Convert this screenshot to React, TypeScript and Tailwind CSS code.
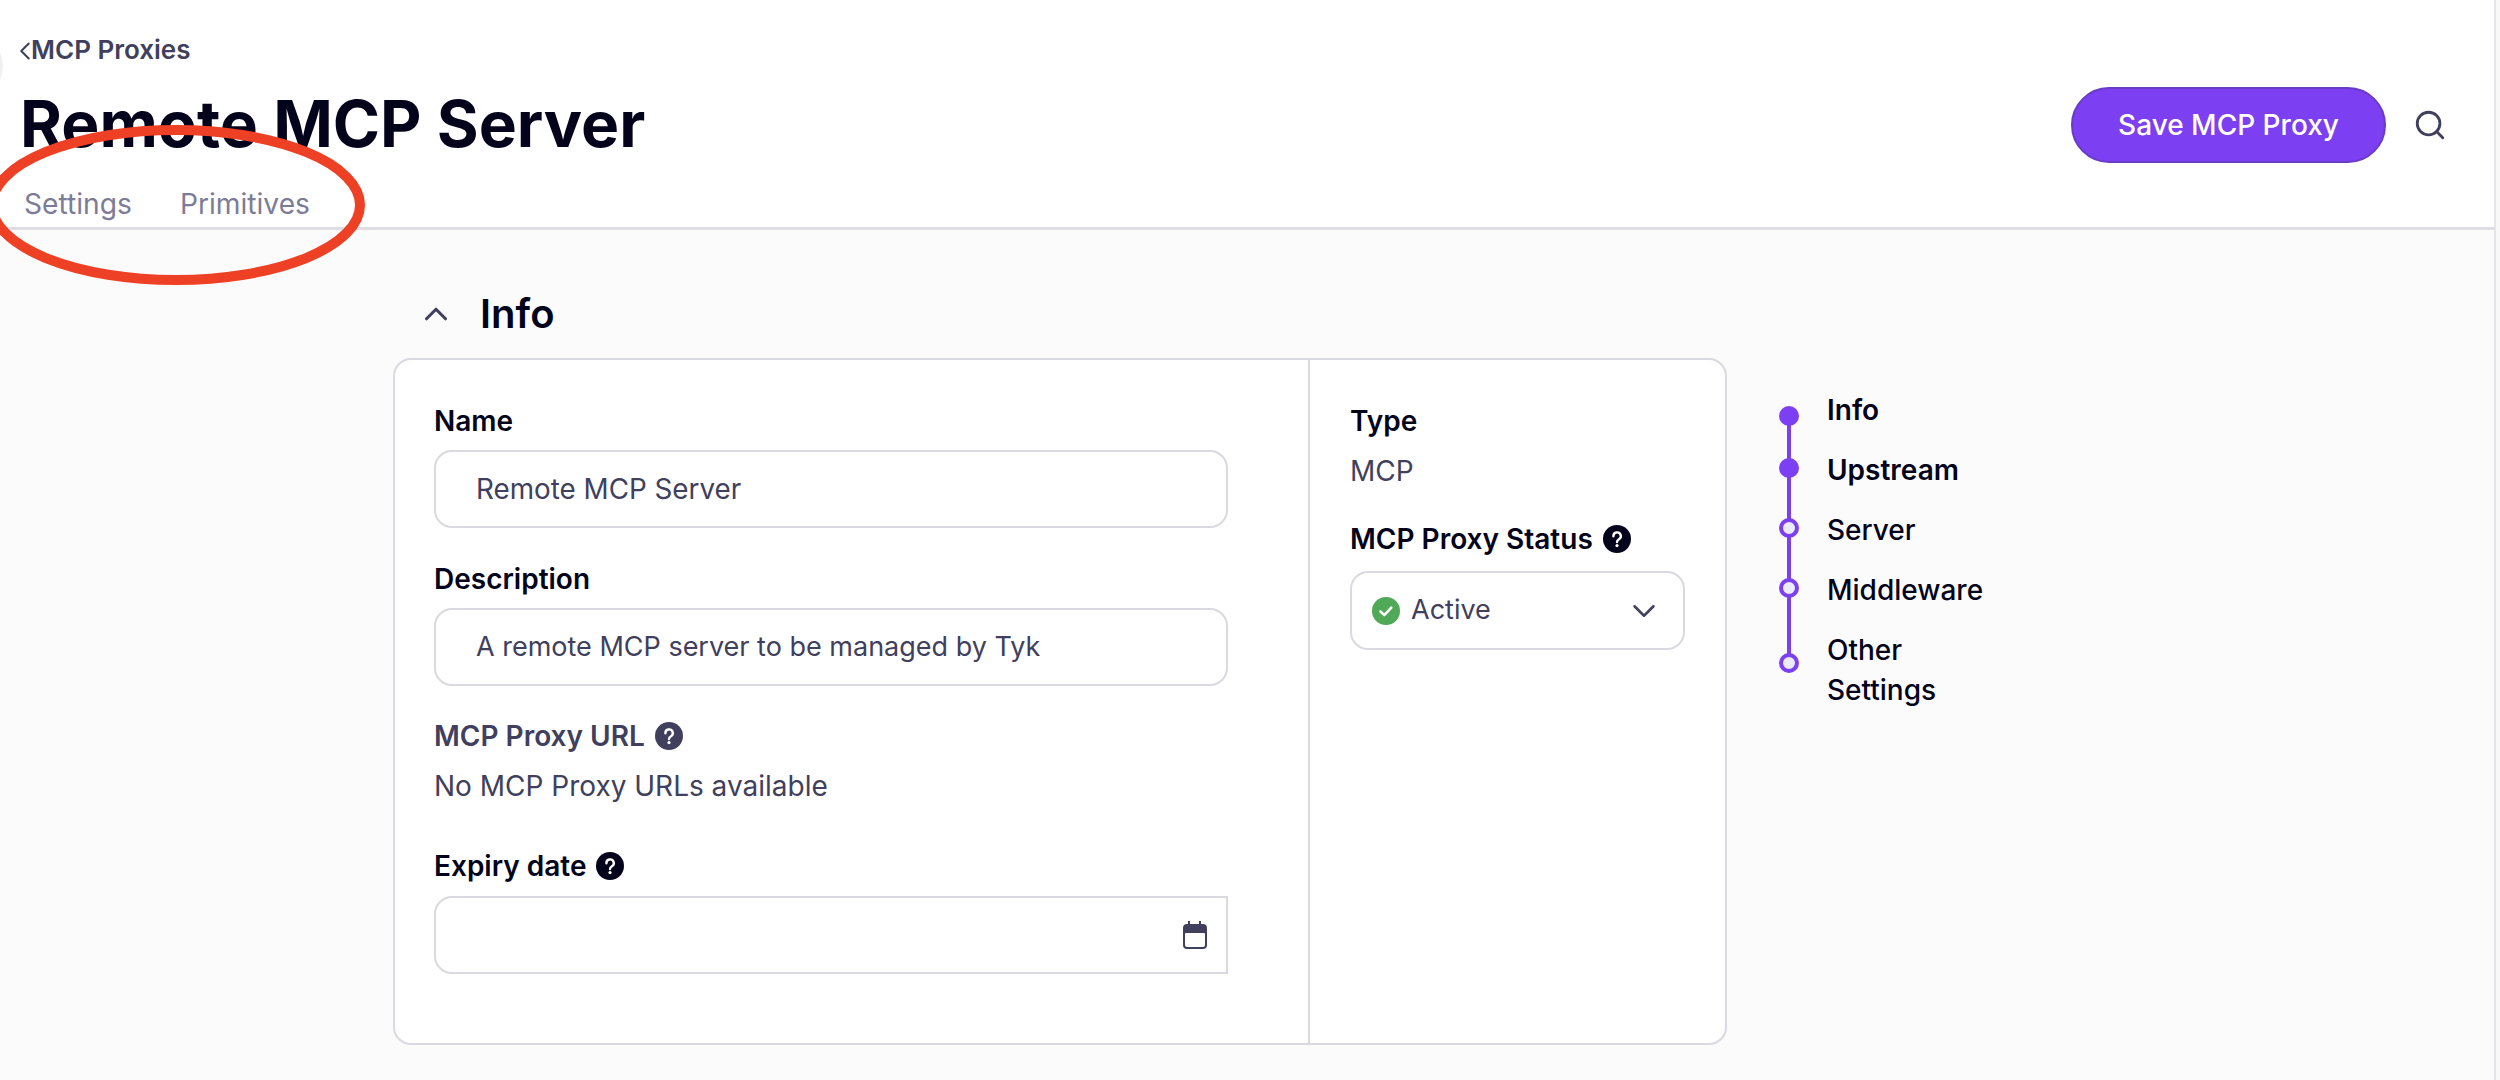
import { ChevronDown, ChevronLeft, ChevronUp, Search } from "lucide-react";

const steps = [
  { label: "Info", done: true, dot: "top-[16px]" },
  { label: "Upstream", done: true, dot: "top-[8px]" },
  { label: "Server", done: false, dot: "top-[8px]" },
  { label: "Middleware", done: false, dot: "top-[8px]" },
  { label: "Other Settings", done: false, dot: "top-[23px]" },
];

function HelpDot({ muted }: { muted?: boolean }) {
  return (
    <svg width="28" height="28" viewBox="0 0 28 28" className="shrink-0">
      <circle cx="14" cy="14" r="14" fill={muted ? "#40405e" : "#03031c"} />
      <path d="M10.4 11.2a3.7 3.7 0 1 1 5.6 3.1c-1.3.8-2 1.4-2 2.7" fill="none" stroke="#fff" strokeWidth="2.4" strokeLinecap="round" />
      <circle cx="14" cy="20.6" r="1.6" fill="#fff" />
    </svg>
  );
}

function TextBox({ value, size }: { value: string; size: string }) {
  return (
    <div className={"flex h-[78px] w-[794px] items-center rounded-[18px] border-2 border-[#d9d9e0] bg-white pl-[40px] pt-[1px] text-[#40405e] " + size}>
      {value}
    </div>
  );
}

export default function App() {
  return (
    <div className="relative h-[1080px] w-[2500px] overflow-hidden bg-[#fbfbfc] font-['Inter',sans-serif] text-[#03031c]">
      {/* scribble from the screenshot, sits over the header */}
      <svg width="400" height="300" viewBox="0 0 400 300" className="pointer-events-none absolute left-0 top-0 z-10">
        <ellipse cx="176" cy="205" rx="184" ry="75" fill="none" stroke="#ee4024" strokeWidth="10" />
      </svg>
      <div className="absolute left-[-65px] top-[32px] z-10 h-[68px] w-[68px] rounded-full bg-[#f1f1f3]" />

      <header className="h-[230px] border-b-[3px] border-[#dddde3] bg-white pr-[6px]">
        <div className="flex items-start justify-between pl-[20px] pr-[47px] pt-[32px]">
          <div>
            <div className="flex h-[34px] items-center text-[26px] font-semibold text-[#40405e]">
              <ChevronLeft size={30} strokeWidth={1.6} className="-ml-[10px] mt-[3px]" />
              <span className="-ml-[9px]">MCP Proxies</span>
            </div>
            <h1 className="mt-[20px] text-[64px] font-bold leading-[76px]">Remote MCP Server</h1>
          </div>
          <div className="mt-[55px] flex items-center gap-[27px]">
            <button className="h-[76px] w-[315px] rounded-full border-2 border-[#6a3bc4] bg-[#7c3ff2] text-[28px] font-[450] text-white">
              Save MCP Proxy
            </button>
            <Search size={34} strokeWidth={2} className="text-[#40405e]" />
          </div>
        </div>
        <nav className="mt-[20px] flex gap-[48px] pl-[24px] text-[28.2px] text-[#7c7c96]">
          <span>Settings</span>
          <span>Primitives</span>
        </nav>
      </header>

      <main className="ml-[393px] pt-[50px]">
        <div className="mb-[10px] flex h-[68px] items-center pl-[24px]">
          <ChevronUp size={38} strokeWidth={2} className="text-[#40405e]" />
          <h2 className="ml-[25px] text-[40px] font-semibold">Info</h2>
        </div>

        <div className="flex items-start">
          <div className="flex h-[687px] w-[1334px] rounded-[18px] border-2 border-[#d9d9e0] bg-white">
            <div className="w-[915px] border-r-2 border-[#d9d9e0] pl-[39px] pt-[43px]">
              <p className="text-[28px] font-semibold leading-[36px]">Name</p>
              <div className="mt-[11px]">
                <TextBox value="Remote MCP Server" size="text-[27.8px]" />
              </div>
              <p className="mt-[33px] text-[28px] font-semibold leading-[36px]">Description</p>
              <div className="mt-[11px]">
                <TextBox value="A remote MCP server to be managed by Tyk" size="text-[27px]" />
              </div>
              <div className="mt-[32px] flex items-center gap-[10px] text-[28px] font-semibold leading-[36px] text-[#40405e]">
                MCP Proxy URL <HelpDot muted />
              </div>
              <p className="mt-[14px] text-[28px] leading-[36px] text-[#40405e]">No MCP Proxy URLs available</p>
              <div className="mt-[44px] flex items-center gap-[10px] text-[28px] font-semibold leading-[36px]">
                Expiry date <HelpDot />
              </div>
              <div className="mt-[12px] flex h-[78px] w-[794px] items-center justify-end rounded-l-[18px] border-2 border-[#d9d9e0] pr-[19px]">
                <svg width="24" height="28" viewBox="0 0 24 28" fill="#40405e">
                  <path d="M5 0h2v4H5zM16 0h2v4h-2z" />
                  <path fillRule="evenodd" d="M4 3h16a4 4 0 0 1 4 4v17a4 4 0 0 1-4 4H4a4 4 0 0 1-4-4V7a4 4 0 0 1 4-4zm-1 9a1 1 0 0 0-1 1v11a2 2 0 0 0 2 2h16a2 2 0 0 0 2-2V13a1 1 0 0 0-1-1z" />
                </svg>
              </div>
            </div>
            <div className="flex-1 pl-[40px] pt-[43px]">
              <p className="text-[28px] font-semibold leading-[36px]">Type</p>
              <p className="mt-[14px] text-[28px] leading-[36px] text-[#40405e]">MCP</p>
              <div className="mt-[32px] flex items-center gap-[10px] text-[28px] font-semibold leading-[36px]">
                MCP Proxy Status <HelpDot />
              </div>
              <div className="mt-[14px] flex h-[79px] w-[335px] items-center rounded-[18px] border-2 border-[#d9d9e0] pl-[20px] pr-[26px] text-[27px] text-[#40405e]">
                <svg width="28" height="28" viewBox="0 0 28 28" className="shrink-0">
                  <circle cx="14" cy="14" r="14" fill="#4fa957" />
                  <path d="M8.5 14.5l3.8 3.6 7-7.4" fill="none" stroke="#fff" strokeWidth="2.6" strokeLinecap="round" strokeLinejoin="round" />
                </svg>
                <span className="ml-[11px]">Active</span>
                <ChevronDown size={38} strokeWidth={1.6} className="ml-auto -mr-[6px]" />
              </div>
            </div>
          </div>

          <ol className="ml-[52px] mt-[32px] w-[215px] text-[28px] font-medium leading-[40px]">
            {steps.map((s, i) => (
              <li key={s.label} className="relative flex pb-[20px] pl-[48px]">
                {i < steps.length - 1 && <span className="absolute bottom-[-33px] left-[8px] top-[20px] w-[4px] bg-[#7c3ff2]" />}
                <span className={"absolute left-0 z-[1] h-[20px] w-[20px] rounded-full border-[4px] border-[#7c3ff2] " + s.dot + (s.done ? " bg-[#7c3ff2]" : " bg-[#ecebf8]")} />
                <span className={s.done ? "font-semibold" : ""}>{s.label}</span>
              </li>
            ))}
          </ol>
        </div>
      </main>

      <div className="absolute right-0 top-0 h-full w-[6px] border-l-2 border-[#e6e6ea] bg-[#f8f8f9]" />
    </div>
  );
}
